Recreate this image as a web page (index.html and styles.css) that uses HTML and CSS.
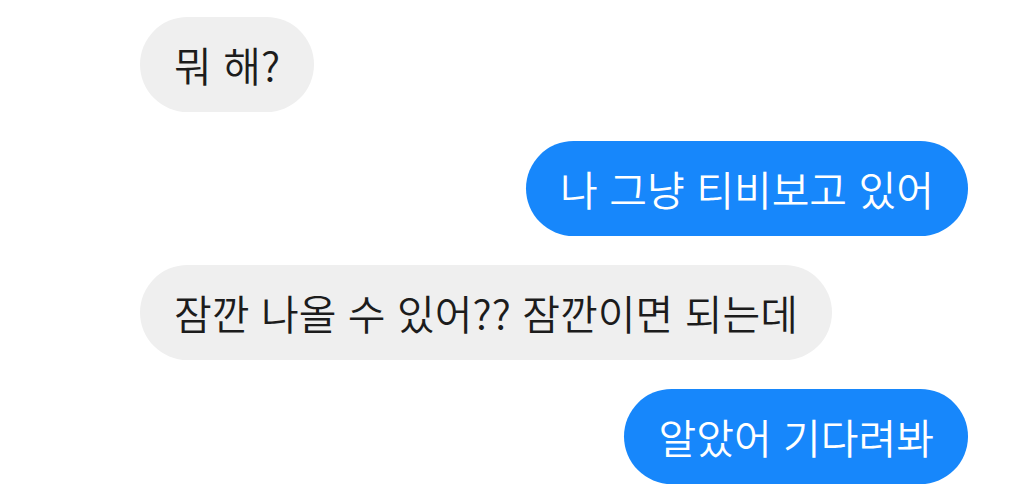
FILE: index.html
```html
<!DOCTYPE html>
<html lang="ko">
<head>
  <meta charset="UTF-8" />
  <meta name="viewport" content="width=device-width, initial-scale=1.0"/>
  <title>대화</title>
  <link rel="stylesheet" href="styles.css">
</head>
<body>

  <!-- Chat -->
  <div class="chat">
    <div class="msg them">뭐 해?</div>
    <div class="msg me">나 그냥 티비보고 있어</div>
    <div class="msg them">잠깐 나올 수 있어?? 잠깐이면 되는데</div>
    <div class="msg me">알았어 기다려봐</div>
  </div>

</body>
</html>
```

FILE: styles.css
```css
:root {
  --blue: #1787fb;
  --gray: #efefef;
  --text-dark: #1c1c1c;
}

* {
  box-sizing: border-box;
}

body {
  margin: 0;
  background: #fff;
  font-family: "Noto Sans CJK KR", "Noto Sans", sans-serif;
  color: var(--text-dark);
}

.chat {
  display: flex;
  flex-direction: column;
  gap: 29px;
  padding: 17px 56px 0 140px;
}

.msg {
  max-width: 85%;
  padding: 23px 34px 24px;
  font-size: 41px;
  font-weight: 350;
  line-height: 48px;
  border-radius: 48px;
  white-space: nowrap;
}

.them {
  align-self: flex-start;
  background: var(--gray);
}

.me {
  align-self: flex-end;
  background: var(--blue);
  color: #fff;
}
```
